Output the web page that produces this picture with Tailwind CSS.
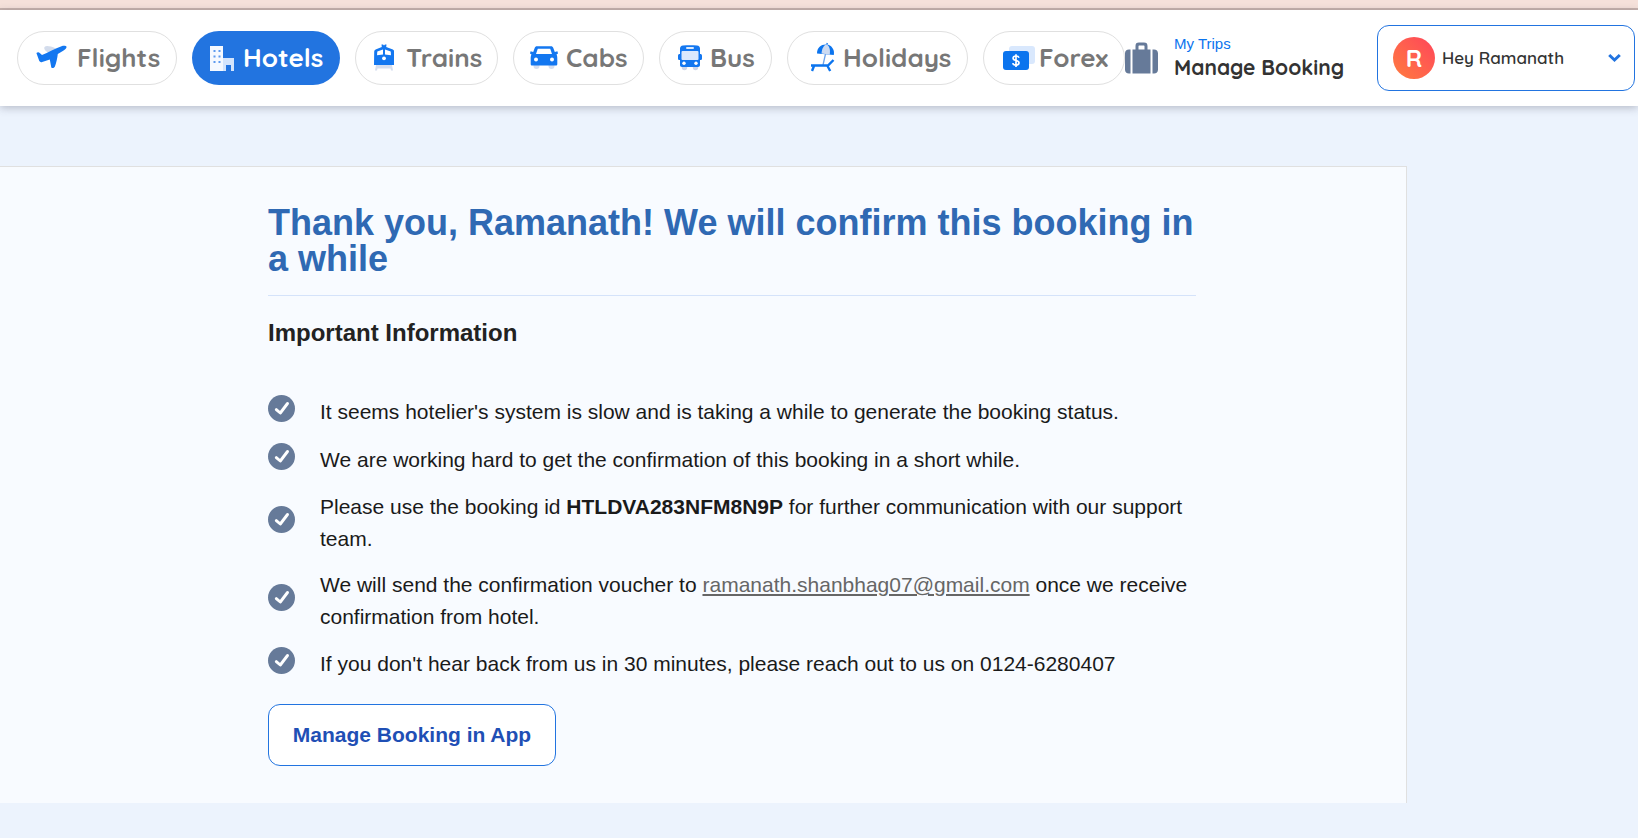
<!DOCTYPE html>
<html lang="en">
<head>
<meta charset="utf-8">
<meta name="viewport" content="width=device-width, initial-scale=1">
<title>Booking status</title>
<script src="https://cdn.jsdelivr.net/npm/@tailwindcss/browser@4"></script>
</head>
<body class="min-h-screen bg-[#ecf3fd] font-['Liberation_Sans',Arial,sans-serif] text-[#1a1a1a]">
<svg class="hidden" aria-hidden="true">
  <symbol id="check" viewBox="0 0 27 27">
    <circle cx="13.5" cy="13.5" r="13.5" fill="#667a99"/>
    <path d="M8.300 14.600l4 3.400 7.200-9.500" fill="none" stroke="#fff" stroke-width="2.900" stroke-linecap="round" stroke-linejoin="round"/>
  </symbol>
</svg>

<div class="h-[10px] border-b-2 border-[#c6b2ad] bg-[#f5e1da]"></div>

<header class="relative flex h-24 items-center bg-white pr-[3px] pl-[17px] font-['Quicksand','Lato',sans-serif] shadow-[0_2px_8px_rgba(60,60,80,0.3)]">
  <nav class="flex shrink-0 gap-[15px] text-[26px] leading-8 font-bold text-[#777]">
    <a href="#" class="flex h-[54px] w-[160px] items-center rounded-full border border-[#e0e0e0] pl-[18px]">
      <svg class="mr-2.5 h-8 w-[31px]" viewBox="0 0 31 32"><path d="M8.500 5C10 3.500 13.500 3.800 20 6.500L12 10.500C9 9 7.500 6.500 8.500 5z" fill="#d3dcec"/><path d="M.4 11C1.800 9.800 2.800 10 4 11.300l2 1.700C12 10.500 19 6.800 25.500 4.300c2.400-.8 4.600-.5 5 .5.300 1.500-1.200 2.700-3.300 3.900L21.800 12c-.5 4-1.500 9-3 12.800-1 1.500-2.500 1.500-3.500.7L13.800 17.500 6.200 20c-1.300.4-2.200.2-2.900-.9z" fill="#1377f0"/></svg>Flights</a>
    <a href="#" class="flex h-[54px] w-[148px] items-center rounded-full bg-[#2274e0] pl-[18px] text-white" aria-current="page">
      <svg class="mr-2 h-8 w-[25px]" viewBox="0 0 25 32"><path d="M0 4h13v25H0z" fill="#f5f9ff"/><path d="M13 16h11v13h-3v-6h-5v6h-3z" fill="#d3e4fc"/><path d="M3.500 8h2v2h-2zM8.500 8h2v2h-2zM3.500 13.500h2v2h-2zM8.500 13.500h2v2h-2zM3.500 19h2v2h-2zM8.500 19h2v2h-2z" fill="#5d9aef"/></svg>Hotels</a>
    <a href="#" class="flex h-[54px] w-[143px] items-center rounded-full border border-[#e0e0e0] pl-[18px]">
      <svg class="mr-3 h-8 w-5" viewBox="0 0 20 32"><path d="M2 23h16l1 5.500h-2l-.5-2h-13l-.500 2H1z" fill="#d5deef"/><path d="M7.500 2.500h1.500l1 1 1-1h1.500l-.3 2.500 6 2.300c1.500.6 1.900 1.300 2 2.500L20 23H0L.2 9.800c.1-1.200.5-1.900 2-2.500l5.600-2.300z" fill="#1377f0"/><path d="M9 7.500v5l-6 .7.300-3.700zM11 7.500v5l6 .7-.3-3.700z" fill="#fff"/><circle cx="10" cy="16.300" r="1.900" fill="#fff"/></svg>Trains</a>
    <a href="#" class="flex h-[54px] w-[131px] items-center rounded-full border border-[#e0e0e0] pl-4">
      <svg class="mr-2 h-8 w-7" viewBox="0 0 28 32"><circle cx="6.500" cy="24" r="3" fill="#d5deef"/><circle cx="21.500" cy="24" r="3" fill="#d5deef"/><path d="M7 4.300h14c1.200 0 1.900.6 2.300 1.700l1.500 4 2.600-.8.600 2.200-1.500 1.200c.8 1.400.8 3 .8 4.500V22c0 1-.6 1.500-1.500 1.500H2.200C1.300 23.500.7 23 .7 22v-4.900c0-1.500 0-3.100.8-4.500L0 11.400l.6-2.200 2.600.8 1.500-4C5.100 4.900 5.800 4.300 7 4.300z" fill="#1377f0"/><path d="M7.800 6.800h12.400l1.800 5.200H6z" fill="#fff"/><circle cx="6" cy="17.500" r="2" fill="#fff"/><circle cx="22" cy="17.500" r="2" fill="#fff"/></svg>Cabs</a>
    <a href="#" class="flex h-[54px] w-[113px] items-center rounded-full border border-[#e0e0e0] pl-[18px]">
      <svg class="mr-2 h-8 w-6" viewBox="0 0 24 32"><circle cx="6.500" cy="25.500" r="2.700" fill="#ccd6ea"/><circle cx="17.500" cy="25.500" r="2.700" fill="#ccd6ea"/><path d="M5 3.500C10 3 14 3 19 3.500c2 .3 3 1.400 3 3V12c1.500 0 2 .500 2 2v2.500c0 1.200-.5 1.500-2 1.500v5c0 1.300-.7 2-2 2H4c-1.300 0-2-.7-2-2v-5c-1.500 0-2-.3-2-1.500V14c0-1.500.5-2 2-2V6.500c0-1.600 1-2.700 3-3z" fill="#1377f0"/><rect x="8" y="5" width="8" height="2" rx="1" fill="#dbe9fd"/><rect x="3.500" y="9" width="17" height="9" rx="1" fill="#dbe9fd"/><circle cx="6" cy="21.300" r="1.700" fill="#fff"/><circle cx="18" cy="21.300" r="1.700" fill="#fff"/></svg>Bus</a>
    <a href="#" class="flex h-[54px] w-[181px] items-center rounded-full border border-[#e0e0e0] pl-[23px]">
      <svg class="mr-2 h-8 w-6" viewBox="0 0 24 32"><path d="M6 11.500C6 5 11 2 15.500 2.500c5 .5 8.500 5 7.300 10.500z" fill="#0b74ee"/><path d="M10.500 11.500C11 6 13 3 15.800 2.500 18.500 4 19.500 8 18.700 12.700z" fill="#ccdaf1"/><path d="M15.800 2.500l.5-1.500" stroke="#0b74ee" stroke-width="1.300"/><path d="M14.500 12l-2.500 11" stroke="#6ea3ea" stroke-width="1.300" fill="none"/><path d="M0 23.500h17l5.500-5.500M3 24l-2 5M16.500 24l2.700 5" stroke="#0b74ee" stroke-width="2.400" fill="none"/></svg>Holidays</a>
    <a href="#" class="flex h-[54px] w-[142px] items-center rounded-full border border-[#e0e0e0] pl-[19px]">
      <svg class="mr-1 h-8 w-8" viewBox="0 0 32 32"><rect x="6" y="4" width="26" height="18" rx="3" fill="#d9e8fd"/><rect x="0" y="9" width="26" height="19" rx="3" fill="#0b74ee"/><path d="M16 15.700c-.4-1.300-1.500-1.700-3-1.700-1.600 0-2.900.7-2.900 2.200 0 3.200 5.900 1.400 5.900 4.600 0 1.600-1.400 2.300-3 2.300-1.700 0-2.900-.6-3.200-2M13 12.200v12.800" fill="none" stroke="#fff" stroke-width="1.700"/></svg>Forex</a>
  </nav>
  <a href="#" class="flex shrink-0 items-center">
    <svg class="mr-4 h-8 w-[33px]" viewBox="0 0 33 32"><path d="M5.500 7.500v24H4c-2.500 0-4-1.500-4-4v-16c0-2.500 1.500-4 4-4zM27.500 7.500v24H29c2.500 0 4-1.500 4-4v-16c0-2.500-1.500-4-4-4z" fill="#667a99"/><path d="M7.500 7.500h3V4c0-2.500 1-3.500 3.500-3.500h5c2.500 0 3.500 1 3.500 3.500v3.500h3v24h-18zM13.500 7.500h6V4.500c0-.8-.2-1-1-1h-4c-.8 0-1 .2-1 1z" fill="#667a99" fill-rule="evenodd"/></svg>
    <span class="flex flex-col">
      <span class="font-['Liberation_Sans',Arial,sans-serif] text-[15px] leading-[18px] text-[#0b74ee]">My Trips</span>
      <span class="text-[21px] leading-7 font-bold text-[#333]">Manage Booking</span>
    </span>
  </a>
  <button class="ml-auto flex h-[66px] w-[258px] items-center rounded-xl border border-[#2274e0] bg-white pr-[13px] pl-[15px]">
    <span class="flex size-[42px] items-center justify-center rounded-full bg-linear-to-tr from-[#ff7a3d] to-[#ff4259] text-2xl font-bold text-white">R</span>
    <span class="ml-[7px] text-[17px] font-semibold text-[#333]">Hey Ramanath</span>
    <svg class="ml-auto h-3 w-[13px]" viewBox="0 0 13 12"><path d="M1.200 3l5.300 5 5.300-5" fill="none" stroke="#2274e0" stroke-width="3"/></svg>
  </button>
</header>

<main class="mt-[60px] mr-[231px] border-t border-r border-[#e0e0e0] bg-[#f8fbff] pt-[38px] pr-[210px] pb-[37px] pl-[268px]">
  <h1 class="border-b border-[#d5e3fa] pb-[18px] text-[36px] leading-9 font-bold text-[#2f69b3]">Thank you, Ramanath! We will confirm this booking in a while</h1>
  <h2 class="mt-[19px] text-2xl leading-9 font-bold text-[#222]">Important Information</h2>
  <ul class="mt-11 flex flex-col gap-3.5 text-[21px] leading-8">
    <li class="flex items-center gap-[25px]"><svg class="mb-[7px] size-[27px] shrink-0"><use href="#check"/></svg><p>It seems hotelier's system is slow and is taking a while to generate the booking status.</p></li>
    <li class="flex items-center gap-[25px]"><svg class="mb-[7px] size-[27px] shrink-0"><use href="#check"/></svg><p>We are working hard to get the confirmation of this booking in a short while.</p></li>
    <li class="flex items-center gap-[25px]"><svg class="mb-[7px] size-[27px] shrink-0"><use href="#check"/></svg><p>Please use the booking id <b>HTLDVA283NFM8N9P</b> for further communication with our support team.</p></li>
    <li class="flex items-center gap-[25px]"><svg class="mb-[7px] size-[27px] shrink-0"><use href="#check"/></svg><p>We will send the confirmation voucher to <a href="mailto:ramanath.shanbhag07@gmail.com" class="text-[#666] underline">ramanath.shanbhag07@gmail.com</a> once we receive confirmation from hotel.</p></li>
    <li class="flex items-center gap-[25px]"><svg class="mb-[7px] size-[27px] shrink-0"><use href="#check"/></svg><p>If you don't hear back from us in 30 minutes, please reach out to us on 0124-6280407</p></li>
  </ul>
  <button class="mt-[23px] h-[62px] w-[288px] rounded-xl border border-[#2274e0] bg-white text-[21px] font-bold text-[#1f4fb5]">Manage Booking in App</button>
</main>
</body>
</html>
